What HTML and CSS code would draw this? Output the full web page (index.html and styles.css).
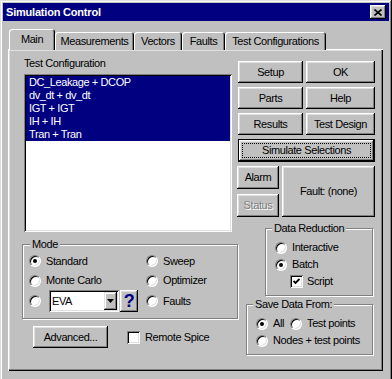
FILE: index.html
```html
<!DOCTYPE html>
<html lang="en">
<head>
  <meta charset="UTF-8" />
  <title>Simulation Control</title>
  <link rel="stylesheet" href="styles.css">
</head>
<body>

  <div class="window">
    <div class="titlebar">
      <span class="title">Simulation Control</span>
      <button class="close-btn" aria-label="Close">
        <svg width="8" height="7" viewBox="0 0 8 7">
          <path d="M0.5 0.5 L7.5 6.5 M7.5 0.5 L0.5 6.5" stroke="#000" stroke-width="1.6" fill="none"/>
        </svg>
      </button>
    </div>

    <div class="tabs">
      <div class="tab tab-main active">Main</div>
      <div class="tab tab-meas">Measurements</div>
      <div class="tab tab-vectors">Vectors</div>
      <div class="tab tab-faults">Faults</div>
      <div class="tab tab-configs">Test Configurations</div>
    </div>

    <div class="panel">
      <!-- left side: configuration list and mode -->
      <div class="left">
        <div class="field-label">Test Configuration</div>
        <div class="list">
          <div class="list-item">DC_Leakage + DCOP</div>
          <div class="list-item">dv_dt + dv_dt</div>
          <div class="list-item">IGT + IGT</div>
          <div class="list-item">IH + IH</div>
          <div class="list-item">Tran + Tran</div>
        </div>

        <div class="group mode-group">
          <span class="group-title">Mode</span>
          <div class="mode-grid">
            <label class="opt"><span class="radio checked"></span>Standard</label>
            <label class="opt"><span class="radio"></span>Sweep</label>
            <label class="opt"><span class="radio"></span>Monte Carlo</label>
            <label class="opt"><span class="radio"></span>Optimizer</label>
            <div class="opt">
              <span class="radio"></span>
              <div class="combo">
                <span class="combo-text">EVA</span>
                <span class="combo-arrow">
                  <svg width="7" height="4" viewBox="0 0 7 4"><path d="M0 0 H7 L3.5 4 Z" fill="#000"/></svg>
                </span>
              </div>
              <button class="btn help-btn">?</button>
            </div>
            <label class="opt"><span class="radio"></span>Faults</label>
          </div>
        </div>

        <div class="bottom-row">
          <button class="btn adv-btn">Advanced...</button>
          <label class="opt remote-opt"><span class="check"></span>Remote Spice</label>
        </div>
      </div>

      <!-- right side: actions and options -->
      <div class="right">
        <div class="btn-grid">
          <button class="btn">Setup</button>
          <button class="btn">OK</button>
          <button class="btn">Parts</button>
          <button class="btn">Help</button>
          <button class="btn">Results</button>
          <button class="btn">Test Design</button>
        </div>
        <button class="btn default-btn"><span class="focus">Simulate Selections</span></button>

        <div class="status-row">
          <div class="small-col">
            <button class="btn">Alarm</button>
            <button class="btn disabled">Status</button>
          </div>
          <button class="btn fault-btn">Fault: (none)</button>
        </div>

        <div class="group reduction-group">
          <span class="group-title">Data Reduction</span>
          <div class="group-body">
            <label class="opt"><span class="radio"></span>Interactive</label>
            <label class="opt"><span class="radio checked"></span>Batch</label>
            <label class="opt script-opt">
              <span class="check checked">
                <svg width="7" height="7" viewBox="0 0 7 7"><path d="M0.5 3 L2.5 5 L6.5 1" stroke="#000" stroke-width="1.8" fill="none"/></svg>
              </span>Script</label>
          </div>
        </div>

        <div class="group save-group">
          <span class="group-title">Save Data From:</span>
          <div class="group-body">
            <div class="opt-row">
              <label class="opt"><span class="radio checked"></span>All</label>
              <label class="opt second"><span class="radio"></span>Test points</label>
            </div>
            <label class="opt"><span class="radio"></span>Nodes + test points</label>
          </div>
        </div>
      </div>
    </div>
  </div>

</body>
</html>
```

FILE: styles.css
```css
* {
  box-sizing: border-box;
  margin: 0;
  padding: 0;
}

html, body {
  height: 379px;
  overflow: hidden;
}

body {
  font-family: "Liberation Sans", Arial, sans-serif;
  font-size: 11px;
  line-height: 13px;
  letter-spacing: -0.4px;
  color: #000;
  background: #c0c0c0;
}

button {
  font: inherit;
  letter-spacing: inherit;
  color: inherit;
  border: none;
  background: #c0c0c0;
}

.window {
  width: 392px;
  height: 386px;
  padding: 3px;
  background: #c0c0c0;
  box-shadow: inset -1px -1px #000, inset 1px 1px #dfdfdf, inset -2px -2px #808080, inset 2px 2px #fff;
}

.titlebar {
  display: flex;
  align-items: center;
  justify-content: space-between;
  height: 18px;
  padding: 0 3px;
  background: #000080;
  color: #fff;
}

.title {
  font-weight: bold;
  letter-spacing: -0.2px;
}

.close-btn {
  display: flex;
  align-items: center;
  justify-content: center;
  width: 16px;
  height: 14px;
  box-shadow: inset -1px -1px #000, inset 1px 1px #fff, inset -2px -2px #808080, inset 2px 2px #dfdfdf;
}

/* tabs */
.tabs {
  display: flex;
  height: 21px;
  margin: 8px 0 -1px 5px;
  padding-left: 1px;
}

.tab {
  height: 18px;
  margin-top: 3px;
  padding-top: 3px;
  text-align: center;
  white-space: nowrap;
  border-radius: 3px 3px 0 0;
  background: #c0c0c0;
  box-shadow: inset 1px 1px #fff, inset -1px 0 #000, inset -2px 0 #808080;
}

.tab.active {
  position: relative;
  z-index: 1;
  height: 21px;
  margin-top: 0;
  padding-top: 4px;
}

.tab-main { width: 46px; }
.tab-meas { width: 79px; }
.tab-vectors { width: 48px; }
.tab-faults { width: 43px; }
.tab-configs { width: 101px; }

.panel {
  display: flex;
  width: 375px;
  height: 322px;
  margin-left: 5px;
  padding: 8px 8px 0 14px;
  box-shadow: inset 1px 1px #fff, inset -1px -1px #000, inset -2px -2px #808080, inset 2px 2px #dfdfdf;
}

/* left column */
.left {
  width: 215px;
  flex: none;
}

.field-label {
  margin-left: 2px;
}

.list {
  width: 208px;
  height: 158px;
  margin: 4px 0 0 2px;
  padding: 2px;
  background: #fff;
  box-shadow: inset 1px 1px #808080, inset -1px -1px #fff, inset 2px 2px #000, inset -2px -2px #dfdfdf;
}

.list-item {
  height: 13px;
  padding-left: 3px;
  background: #000080;
  color: #fff;
  white-space: nowrap;
}

.group {
  border: 1px solid #808080;
  box-shadow: inset 1px 1px #fff, 1px 1px #fff;
}

.group-title {
  display: table;
  margin: -7px 0 0 6px;
  padding: 0 2px;
  background: #c0c0c0;
}

.mode-group {
  width: 216px;
  margin-top: 12px;
}

.mode-group .group-title {
  margin-left: 7px;
}

.mode-grid {
  display: grid;
  grid-template-columns: 117px 1fr;
  grid-template-rows: 20px 19px 22px;
  padding: 0 0 6px 6px;
}

.opt {
  display: flex;
  align-items: center;
  gap: 5px;
  white-space: nowrap;
}

.radio {
  position: relative;
  flex: none;
  width: 12px;
  height: 12px;
  border-radius: 50%;
  background: #fff;
  border: 1px solid;
  border-color: #808080 #fff #fff #808080;
  box-shadow: inset 1px 1px #000, inset -1px -1px #dfdfdf;
}

.radio.checked::after {
  content: "";
  position: absolute;
  top: 3px;
  left: 3px;
  width: 4px;
  height: 4px;
  border-radius: 50%;
  background: #000;
}

.check {
  display: flex;
  align-items: center;
  justify-content: center;
  flex: none;
  width: 13px;
  height: 13px;
  background: #fff;
  box-shadow: inset 1px 1px #808080, inset -1px -1px #fff, inset 2px 2px #000, inset -2px -2px #dfdfdf;
}

.combo {
  display: flex;
  width: 70px;
  height: 22px;
  margin-left: 3px;
  padding: 2px;
  background: #fff;
  box-shadow: inset 1px 1px #808080, inset -1px -1px #fff, inset 2px 2px #000, inset -2px -2px #dfdfdf;
}

.combo-text {
  flex: 1;
  padding-left: 1px;
  line-height: 18px;
}

.combo-arrow {
  display: flex;
  align-items: center;
  justify-content: center;
  width: 13px;
  background: #c0c0c0;
  box-shadow: inset -1px -1px #000, inset 1px 1px #dfdfdf, inset -2px -2px #808080, inset 2px 2px #fff;
}

.help-btn {
  width: 18px;
  height: 22px;
  margin-left: -4px;
  font-size: 18px;
  font-weight: bold;
  color: #000080;
}

.bottom-row {
  display: flex;
  align-items: center;
  margin-top: 7px;
}

.adv-btn {
  width: 75px;
  height: 22px;
  margin-left: 11px;
}

.remote-opt {
  margin-left: 19px;
}

/* buttons */
.btn {
  display: flex;
  align-items: center;
  justify-content: center;
  white-space: nowrap;
  box-shadow: inset -1px -1px #000, inset 1px 1px #fff, inset -2px -2px #808080, inset 2px 2px #dfdfdf;
}

.btn.disabled {
  color: #808080;
  text-shadow: 1px 1px #fff;
}

/* right column */
.right {
  width: 138px;
  flex: none;
  padding-top: 4px;
}

.btn-grid {
  display: grid;
  grid-template-columns: 65px 69px;
  grid-auto-rows: 22px;
  gap: 4px 3px;
  margin-left: 1px;
}

.default-btn {
  width: 137px;
  height: 23px;
  margin: 4px 0 0 1px;
  border: 1px solid #000;
  align-items: stretch;
}

.focus {
  flex: 1;
  display: flex;
  align-items: center;
  justify-content: center;
  margin: 3px;
  border: 1px dotted #000;
}

.status-row {
  display: flex;
  gap: 3px;
  margin-top: 4px;
}

.small-col {
  display: flex;
  flex-direction: column;
  gap: 5px;
  width: 42px;
}

.small-col .btn {
  height: 23px;
}

.fault-btn {
  width: 93px;
  height: 51px;
}

.reduction-group {
  width: 108px;
  margin: 11px 0 0 28px;
}

.save-group {
  width: 127px;
  margin: 8px 0 0 9px;
}

.group-body {
  display: grid;
  grid-auto-rows: 17px;
  padding: 4px 0 5px 9px;
}

.script-opt {
  margin-left: 15px;
  gap: 4px;
}

.opt-row {
  display: flex;
}

.opt.second {
  margin-left: 6px;
}
```
